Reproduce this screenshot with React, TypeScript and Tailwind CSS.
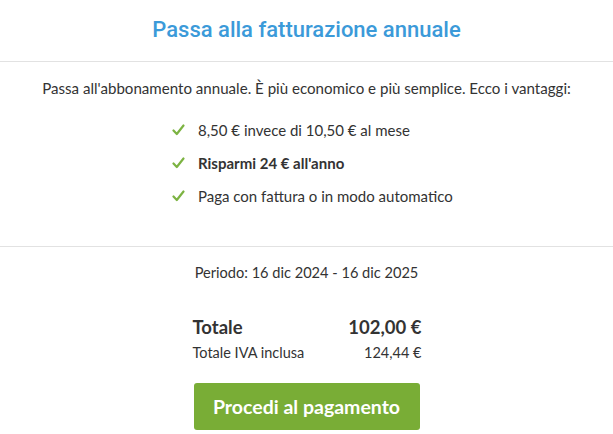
import React from "react";

const Check = () => (
  <svg width="13" height="12" viewBox="0 0 13 12" className="shrink-0">
    <path d="M1.5 6.5 L4.8 10 L11.5 1.5" fill="none" stroke="#7cb342" strokeWidth="2.2" strokeLinecap="round" strokeLinejoin="round" />
  </svg>
);

export default function App() {
  const body = { fontFamily: "Lato, 'Noto Sans', sans-serif" };
  return (
    <div className="w-[613px] h-[434px] bg-white overflow-hidden text-[#333]" style={body}>
      <div className="h-[62px] flex items-center justify-center border-b border-[#e2e2e2]">
        <h1 className="text-[22px] font-medium text-[#3b9ad9] pb-[2px]" style={{ fontFamily: "Roboto, sans-serif" }}>
          Passa alla fatturazione annuale
        </h1>
      </div>
      <div className="h-[185px] border-b border-[#e2e2e2] flex flex-col items-center pt-[16px]">
        <p className="text-[15.1px] leading-[20px]">
          Passa all'abbonamento annuale. È più economico e più semplice. Ecco i vantaggi:
        </p>
        <ul className="mt-[22px] flex flex-col gap-[13px] self-start ml-[172px]">
          <li className="flex items-center gap-[13px] text-[15px] leading-[20px]">
            <Check />
            <span>8,50 € invece di 10,50 € al mese</span>
          </li>
          <li className="flex items-center gap-[13px] text-[15px] leading-[20px] font-bold">
            <Check />
            <span>Risparmi 24 € all'anno</span>
          </li>
          <li className="flex items-center gap-[13px] text-[15px] leading-[20px]">
            <Check />
            <span>Paga con fattura o in modo automatico</span>
          </li>
        </ul>
      </div>
      <div className="flex flex-col items-center">
        <p className="mt-[16px] text-[14.6px] leading-[20px]">Periodo: 16 dic 2024 - 16 dic 2025</p>
        <div className="w-[229px] mt-[31px] ml-[1px]">
          <div className="flex justify-between text-[18.5px] font-bold leading-[26px]">
            <span>Totale</span>
            <span>102,00 €</span>
          </div>
          <div className="flex justify-between text-[14.5px] leading-[18px] mt-[4px]">
            <span>Totale IVA inclusa</span>
            <span>124,44 €</span>
          </div>
        </div>
        <button className="mt-[21px] w-[226px] h-[47px] rounded-[3px] bg-[#79ad36] text-white text-[19.5px] font-bold">
          Procedi al pagamento
        </button>
      </div>
    </div>
  );
}
